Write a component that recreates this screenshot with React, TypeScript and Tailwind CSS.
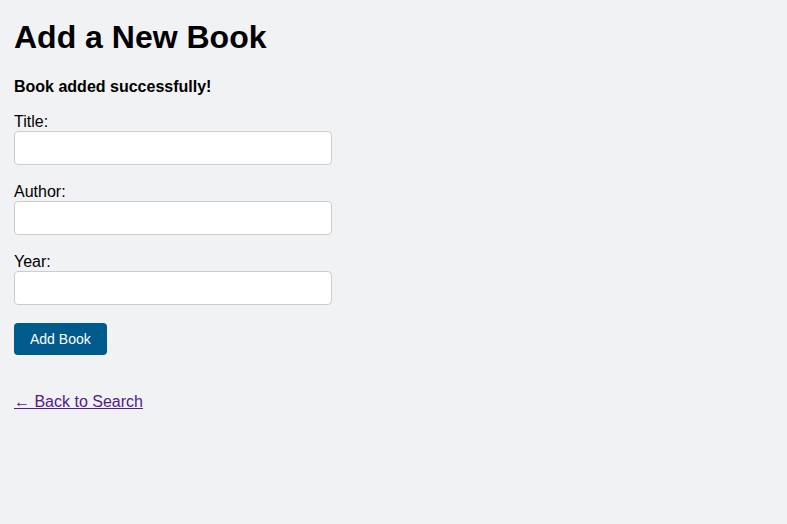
const fields = ["Title", "Author", "Year"];

export default function App() {
    return (
        <div className="min-h-screen bg-[#f1f2f4] px-[14px] pt-[19px] font-['Liberation_Sans',Arial,sans-serif] text-black">
            <h1 className="text-[32px] font-bold leading-[37px]">Add a New Book</h1>
            <p className="mt-[22px] text-base font-bold leading-[18px]">Book added successfully!</p>
            <form className="mt-[16px]" onSubmit={(e) => e.preventDefault()}>
                {fields.map((f) => (
                    <div key={f} className="mb-[17px]">
                        <label className="block text-base leading-[19px]">{f}:</label>
                        <input
                            type="text"
                            className="block h-[34px] w-[318px] rounded border border-[#cccccc] bg-white px-2 text-sm outline-none"
                        />
                    </div>
                ))}
                {/* margin collapses with the last field's mb */}
                <button
                    type="submit"
                    className="mt-[18px] block h-[32px] rounded bg-[#005a8c] px-4 text-sm leading-4 text-white"
                >
                    Add Book
                </button>
            </form>
            <a href="#" className="mt-[38px] block w-fit text-base leading-[18px] text-[#551a8b] underline">
                ← Back to Search
            </a>
        </div>
    );
}
